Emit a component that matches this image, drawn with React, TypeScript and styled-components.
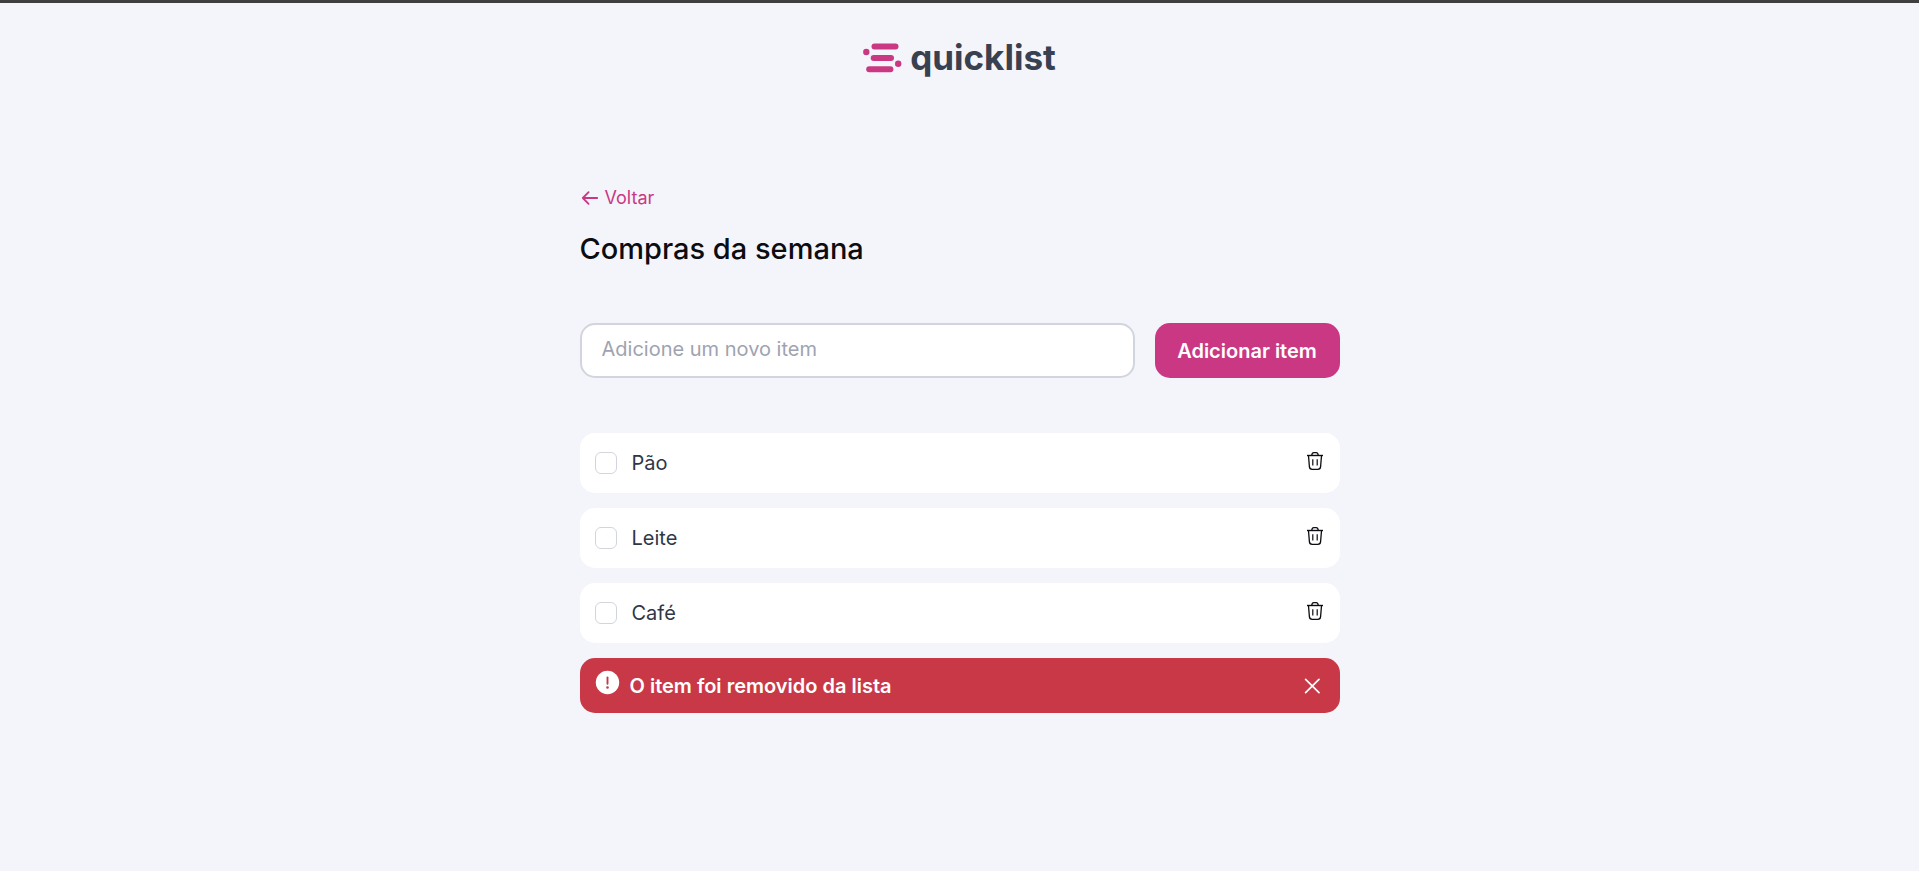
import React, { useState } from "react";
import styled, { createGlobalStyle } from "styled-components";

const GlobalStyle = createGlobalStyle`
  *, *::before, *::after { box-sizing: border-box; }
  body {
    margin: 0;
    background: #f4f5fb;
    color: #0b0d12;
    font-family: Inter, "Liberation Sans", sans-serif;
    font-size: 20px;
    line-height: 24px;
  }
  button, input { font: inherit; }
`;

const Page = styled.div`
  min-height: 100vh;
  border-top: 3px solid #3f3f3f;
`;

const Header = styled.header`
  display: flex;
  justify-content: center;
  align-items: center;
  gap: 8px;
  padding: 34px 20px 0;
`;

const Wordmark = styled.span`
  padding-bottom: 2px;
  color: #394150;
  font-size: 35px;
  font-weight: 700;
  line-height: 40px;
`;

const Main = styled.main`
  display: flex;
  flex-direction: column;
  width: 100%;
  max-width: 800px;
  margin: 0 auto;
  padding: 108px 20px 40px;
`;

const BackLink = styled.a`
  display: flex;
  align-items: center;
  align-self: flex-start;
  gap: 5px;
  color: #ca3884;
  font-size: 18px;
  line-height: 22px;
  text-decoration: none;
`;

const Title = styled.h1`
  margin: 20px 0 55px;
  font-size: 29px;
  font-weight: 500;
  line-height: 39px;
`;

const Form = styled.form`
  display: flex;
  gap: 20px;
  margin-bottom: 55px;
`;

const TextInput = styled.input`
  flex: 1;
  min-width: 0;
  height: 55px;
  padding: 0 20px 3px;
  border: 2px solid #d2d5dd;
  border-radius: 15px;
  background: #fff;
  color: #394150;

  &::placeholder { color: #9fa3b0; opacity: 1; }
`;

const AddButton = styled.button`
  min-width: 185px;
  height: 55px;
  padding: 0 22px;
  border: 0;
  border-radius: 15px;
  background: #ca3884;
  color: #fff;
  font-weight: 600;
  white-space: nowrap;
  cursor: pointer;
`;

const List = styled.ul`
  display: flex;
  flex-direction: column;
  gap: 15px;
  margin: 0 0 15px;
  padding: 0;
  list-style: none;
`;

const Row = styled.li`
  display: flex;
  align-items: center;
  justify-content: space-between;
  height: 60px;
  padding: 0 15px;
  border-radius: 15px;
  background: #fff;
`;

const ItemLabel = styled.label`
  display: flex;
  align-items: center;
  gap: 15px;
  color: #2f3747;
`;

const Checkbox = styled.input`
  appearance: none;
  width: 22px;
  height: 22px;
  margin: 0;
  border: 1px solid #d2d5dd;
  border-radius: 6px;
  background: #fff;

  &:checked { border-color: #ca3884; background: #ca3884; }
`;

const IconButton = styled.button`
  display: flex;
  padding: 0;
  border: 0;
  background: none;
  color: inherit;
  cursor: pointer;
`;

const DeleteButton = styled(IconButton)`
  padding-bottom: 4px;
`;

const Alert = styled.div`
  display: flex;
  align-items: center;
  gap: 10px;
  height: 55px;
  padding: 0 18px 0 15px;
  border-radius: 15px;
  background: #c93847;
  color: #fff;
  font-weight: 600;
`;

const AlertIcon = styled.svg`
  margin-bottom: 6px;
`;

const AlertText = styled.span`
  flex: 1;
`;

const LogoMark = () => (
  <svg width="39" height="31" viewBox="0 0 39 31" fill="#ca3884" aria-hidden="true">
    <rect x="8.5" y="0.5" width="27" height="6" rx="3" />
    <rect x="7.7" y="12" width="23.3" height="6" rx="3" />
    <rect x="3.2" y="23.3" width="27.2" height="6" rx="3" />
    <circle cx="3.3" cy="9" r="3.2" />
    <circle cx="35.2" cy="20.8" r="3.2" />
  </svg>
);

const ArrowLeft = () => (
  <svg width="20" height="20" viewBox="0 0 20 20" fill="none" stroke="currentColor" strokeWidth="1.8" strokeLinecap="round" strokeLinejoin="round" aria-hidden="true">
    <path d="M17.2 10H3M8.6 4.2 2.8 10l5.8 5.8" />
  </svg>
);

const TrashIcon = () => (
  <svg width="20" height="20" viewBox="0 0 20 20" fill="none" stroke="#0b0d12" aria-hidden="true">
    <path d="M2 4.5h16" strokeWidth="1.4" />
    <path d="M6.8 4.2C7 2.5 7.6 1.7 8.8 1.7h2.4c1.2 0 1.8.8 2 2.5M3.5 4.8l.9 10.8c.1 1.8 1.1 2.7 2.8 2.7h5.6c1.7 0 2.7-.9 2.8-2.7l.9-10.8" strokeWidth="1.3" />
    <path d="M7.8 8.3v6.2M12.2 8.3v6.2" strokeWidth="1.2" />
  </svg>
);

const CloseIcon = () => (
  <svg width="20" height="20" viewBox="0 0 20 20" fill="none" stroke="currentColor" strokeWidth="1.7" strokeLinecap="round" aria-hidden="true">
    <path d="m3.6 3.3 13.4 13.4M17 3.3 3.6 16.7" />
  </svg>
);

export default function App() {
  const [items, setItems] = useState(["Pão", "Leite", "Café"]);
  const [draft, setDraft] = useState("");
  const [alertOpen, setAlertOpen] = useState(true);

  const addItem = (event: React.FormEvent) => {
    event.preventDefault();
    const name = draft.trim();
    if (!name) return;
    setItems([...items, name]);
    setDraft("");
  };

  const removeItem = (index: number) => {
    setItems(items.filter((_, i) => i !== index));
    setAlertOpen(true);
  };

  return (
    <Page>
      <GlobalStyle />
      <Header>
        <LogoMark />
        <Wordmark>quicklist</Wordmark>
      </Header>
      <Main>
        <BackLink href="#">
          <ArrowLeft />
          Voltar
        </BackLink>
        <Title>Compras da semana</Title>
        <Form onSubmit={addItem}>
          <TextInput
            type="text"
            aria-label="Adicione um novo item"
            placeholder="Adicione um novo item"
            value={draft}
            onChange={(event) => setDraft(event.target.value)}
          />
          <AddButton type="submit">Adicionar item</AddButton>
        </Form>
        <List>
          {items.map((item, index) => (
            <Row key={`${item}-${index}`}>
              <ItemLabel>
                <Checkbox type="checkbox" />
                {item}
              </ItemLabel>
              <DeleteButton type="button" aria-label={`Remover ${item}`} onClick={() => removeItem(index)}>
                <TrashIcon />
              </DeleteButton>
            </Row>
          ))}
        </List>
        {alertOpen && (
          <Alert role="alert">
            <AlertIcon width="25" height="25" viewBox="0 0 25 25" aria-hidden="true">
              <circle cx="12.5" cy="12.5" r="11.7" fill="#fff" />
              <path d="M12.5 7.4v6.4" stroke="#c93847" strokeWidth="1.9" strokeLinecap="round" />
              <circle cx="12.5" cy="17.5" r="1.3" fill="#c93847" />
            </AlertIcon>
            <AlertText>O item foi removido da lista</AlertText>
            <IconButton type="button" aria-label="Fechar" onClick={() => setAlertOpen(false)}>
              <CloseIcon />
            </IconButton>
          </Alert>
        )}
      </Main>
    </Page>
  );
}
